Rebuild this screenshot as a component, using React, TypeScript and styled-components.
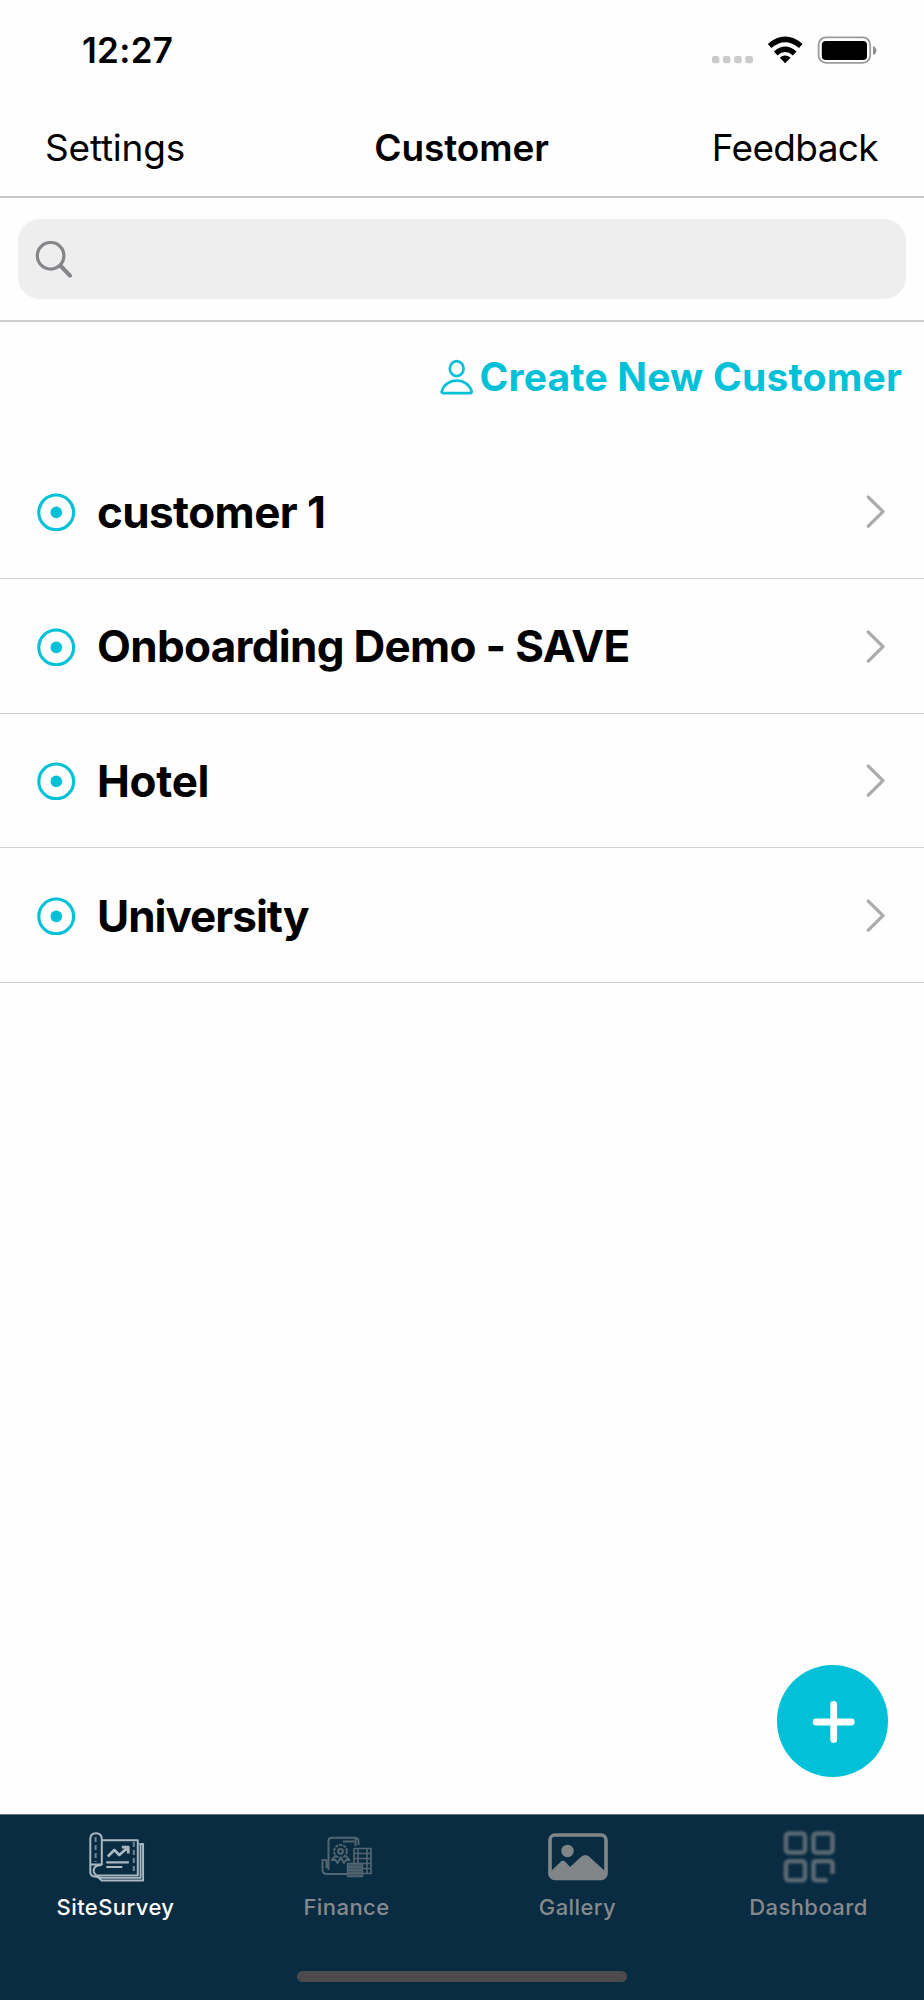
import React from 'react';
import styled, { createGlobalStyle } from 'styled-components';

const ACCENT = '#00c1d7';
const NAVY = '#0a2c42';

const GlobalStyle = createGlobalStyle`
  *, *::before, *::after { box-sizing: border-box; }
  body {
    margin: 0;
    background: #fff;
    color: #000;
    font-family: Inter, 'Liberation Sans', sans-serif;
    -webkit-font-smoothing: antialiased;
  }
  svg { display: block; flex: none; }
`;

const Screen = styled.div`
  position: relative;
  width: 924px;
  height: 2000px;
  display: flex;
  flex-direction: column;
  overflow: hidden;
  background: #fefefe;
`;

const StatusBar = styled.div`
  height: 100px;
  padding: 0 47px 0 82px;
  display: flex;
  justify-content: space-between;
  align-items: center;
`;

const Label = styled.span<{ $size: number; $weight?: number; $spacing?: number }>`
  font-size: ${p => p.$size}px;
  font-weight: ${p => p.$weight ?? 400};
  letter-spacing: ${p => p.$spacing ?? 0}px;
  line-height: 1.2;
  white-space: nowrap;
`;

const NavBar = styled.header`
  height: 98px;
  padding: 0 46px 0 45px;
  display: grid;
  grid-template-columns: 1fr auto 1fr;
  align-items: center;
  border-bottom: 2px solid #c6c6c7;

  & > :last-child { justify-self: end; }
`;

const SearchSection = styled.div`
  height: 124px;
  padding: 21px 18px 0;
  border-bottom: 2px solid #cdcdce;
`;

const SearchField = styled.div`
  height: 80px;
  border-radius: 22px;
  background: #eee;
  padding: 22px 17px;
`;

const CreateButton = styled.button`
  align-self: flex-end;
  height: 110px;
  margin-bottom: 12.33px;
  padding: 0 22px 0 0;
  border: 0;
  background: none;
  font-family: inherit;
  color: ${ACCENT};
  display: flex;
  align-items: center;
  gap: 6px;
`;

const List = styled.ul`
  list-style: none;
  margin: 0;
  padding: 0;
  flex: 1;
`;

const Row = styled.li`
  height: 134.67px;
  padding: 2px 38px 0 37px;
  display: flex;
  align-items: center;
  gap: 22px;
  border-bottom: 1px solid #d0d0d2;

  & > :last-child { margin-left: auto; }
`;

const Fab = styled.button`
  position: absolute;
  right: 36px;
  bottom: 223.5px;
  width: 111.5px;
  height: 111.5px;
  padding: 0;
  border: 0;
  border-radius: 50%;
  background: ${ACCENT};
`;

const TabBar = styled.nav`
  height: 186px;
  border-top: 1px solid #6c7a80;
  background: ${NAVY};
  display: grid;
  grid-template-columns: repeat(4, 1fr);
  grid-template-rows: 1fr auto;
`;

const Tab = styled.div<{ $active?: boolean }>`
  display: flex;
  flex-direction: column;
  align-items: center;
  padding-top: 14px;
  gap: 11px;
  color: ${p => (p.$active ? '#fff' : '#85898c')};
`;

const TabIcon = styled.svg<{ $soften?: number }>`
  width: 60px;
  height: 54px;
  overflow: visible;
  fill: none;
  filter: ${p => (p.$soften ? `blur(${p.$soften}px)` : 'none')};
`;

const HomeIndicator = styled.div`
  grid-column: 1 / -1;
  justify-self: center;
  width: 330px;
  height: 11px;
  margin-bottom: 18px;
  border-radius: 6px;
  background: #4d4a4b;
`;

const StatusIcons = () => (
  <svg width="166" height="30" viewBox="711 35 166 30">
    <g fill="#cbcbcb">
      <rect x="712" y="56" width="7.4" height="7.2" rx="2" />
      <rect x="723" y="56" width="7.4" height="7.2" rx="2" />
      <rect x="734.2" y="56" width="7.6" height="7.2" rx="2" />
      <rect x="745.3" y="56" width="7.6" height="7.2" rx="2" />
    </g>
    <path d="M785.2 63.2L779.8 57.8Q785.2 53.4 790.6 57.8Z" />
    <g fill="none" stroke="#000" strokeWidth="5.4">
      <path d="M775.7 53.5Q785.2 45 794.7 53.5" />
      <path d="M769.6 46Q785.2 32.8 800.8 46" />
    </g>
    <rect x="818.6" y="37.3" width="51.6" height="25.6" rx="7.5" fill="none" stroke="#9b9b9b" strokeWidth="1.8" />
    <rect x="821.8" y="41" width="45.2" height="19" rx="4" />
    <path d="M873 46q3.4 1 3.4 4.5t-3.4 4.5z" fill="#8e8e8e" />
  </svg>
);

const SearchIcon = () => (
  <svg width="38" height="38" viewBox="0 0 38 38" fill="none" stroke="#85858a" strokeLinecap="round">
    <circle cx="15.6" cy="14.8" r="13.3" strokeWidth="3.2" />
    <path d="M25.4 24.6L35 34.6" strokeWidth="4.2" />
  </svg>
);

const PersonIcon = () => (
  <svg width="33" height="36" viewBox="0 0 33 36" fill="none" stroke={ACCENT} strokeWidth="2.7">
    <ellipse cx="16.7" cy="9.6" rx="6.9" ry="7.5" />
    <path d="M3.5 34.2h26.4c1.3 0 2-.9 1.6-2.2C30 26.4 24 21.5 16.7 21.5S3.4 26.4 1.9 32c-.4 1.3.3 2.2 1.6 2.2Z" />
  </svg>
);

const TargetIcon = () => (
  <svg width="38" height="38" viewBox="0 0 38 38">
    <circle cx="19.2" cy="19.4" r="17.4" fill="none" stroke={ACCENT} strokeWidth="3.1" />
    <circle cx="19.3" cy="19.4" r="5.8" fill={ACCENT} />
  </svg>
);

const Chevron = () => (
  <svg width="20" height="34" viewBox="0 0 20 34" fill="none" stroke="#acacac" strokeWidth="3.4" strokeLinecap="round" strokeLinejoin="round">
    <path d="M2.3 2.1L17 16.6L2.3 31.1" />
  </svg>
);

const PlusIcon = () => (
  <svg width="112" height="112" viewBox="0 0 112 112" stroke="#fff" strokeWidth="6.8" strokeLinecap="round">
    <path d="M56.7 39.4v35.2M39.1 57h35.2" />
  </svg>
);

const SurveyIcon = () => (
  <TabIcon viewBox="0 0 60 54" stroke="#a9b7c0" strokeWidth="2" strokeLinejoin="round" $soften={0.5}>
    <g transform="translate(-0.7 0)">
      <path d="M5 44V10Q5 4.2 10.7 4.2T16.5 10V36M16.5 11.2H52.5V46.5H10" />
      <path d="M5 35.5H16.5M5 44Q6 49 15 47.5M16.5 36Q7.5 36 8.5 43Q9 45 11 46" />
      <path d="M54 15H57.8V51.5H16.5L11 47M55.3 16V48.9H13" strokeWidth="1.9" />
      <path d="M10.3 8V33M48.5 13V44" stroke="#6f8795" strokeDasharray="5 3" />
      <path d="M22.5 27.5L29 21L34 26L42.5 18.5M36.5 18.2H43V24.5" strokeWidth="2.7" />
      <path d="M21 33.3H43.5M21 38H37" strokeWidth="2.2" />
    </g>
  </TabIcon>
);

const FinanceIcon = () => (
  <TabIcon viewBox="0 0 60 54" stroke="#51646f" strokeWidth="2" strokeLinejoin="round" $soften={0.6}>
    <path d="M11.5 41V12Q11.5 8.800 15 8.800H38Q41.500 8.800 41.500 13V16M9.500 31H5.500V41Q5.500 45 10 45H31M9.500 31V39M38.500 10V17M26 12.500H37" />
    <circle cx="23.5" cy="22.3" r="6.4" strokeDasharray="3 1" />
    <circle cx="23.5" cy="22.3" r="2.4" />
    <path d="M19 26.5L15 31L18.5 31L20.5 34L23.5 29M28 26.5L32.5 31L29 31L27 34L24 29" />
    <path d="M37 19.500H54V44.500H37ZM37 24.500H54M37 29.500H54M37 34.500H54M37 39.500H54M41 20V44M50 20V44" strokeWidth="1.7" />
    <path d="M30.500 34.500H45.500V47.500H30.500ZM30.500 38H45.500M30.500 41H45.500M30.500 44H45.500" fill="#3d5565" strokeWidth="1.5" />
  </TabIcon>
);

const GalleryIcon = () => (
  <TabIcon viewBox="0 0 60 54">
    <rect x="2" y="6" width="56" height="43.5" rx="5" fill="none" stroke="#808588" strokeWidth="3.7" />
    <circle cx="19.5" cy="22" r="6.2" fill="#808588" />
    <path d="M2 43L12.5 33Q15 30.5 17.5 33L22 38L33.5 27.5Q37.5 24.5 41 27.5L58 43V47Q58 50 54 50H6Q2 50 2 47Z" fill="#808588" />
  </TabIcon>
);

const DashboardIcon = () => (
  <TabIcon viewBox="0 0 60 54" stroke="#5a6973" strokeWidth="4.6" $soften={1}>
    <rect x="7" y="4.5" width="19" height="19" rx="3" />
    <rect x="34.5" y="4.5" width="19" height="19" rx="3" />
    <rect x="7" y="32.2" width="19" height="19" rx="3" />
    <path d="M48.5 51.2H37.5Q34.5 51.2 34.5 48.2V35.2Q34.5 32.2 37.5 32.2H50.5Q53.5 32.2 53.5 35.2V45" />
  </TabIcon>
);

const customers = [
  { name: 'customer 1', spacing: -0.6 },
  { name: 'Onboarding Demo - SAVE', spacing: -0.69 },
  { name: 'Hotel', spacing: -0.3 },
  { name: 'University', spacing: -1 },
];

const tabs = [
  { name: 'SiteSurvey', icon: <SurveyIcon />, active: true },
  { name: 'Finance', icon: <FinanceIcon /> },
  { name: 'Gallery', icon: <GalleryIcon /> },
  { name: 'Dashboard', icon: <DashboardIcon /> },
];

export default function App() {
  return (
    <Screen>
      <GlobalStyle />
      <StatusBar>
        <Label $size={35} $weight={600} $spacing={0.3}>12:27</Label>
        <StatusIcons />
      </StatusBar>
      <NavBar>
        <Label $size={37} $spacing={-0.2}>Settings</Label>
        <Label $size={37} $weight={600} $spacing={-0.1}>Customer</Label>
        <Label $size={37} $spacing={-0.65}>Feedback</Label>
      </NavBar>
      <SearchSection>
        <SearchField>
          <SearchIcon />
        </SearchField>
      </SearchSection>
      <CreateButton>
        <PersonIcon />
        <Label $size={39} $weight={700} $spacing={0.2}>Create New Customer</Label>
      </CreateButton>
      <List>
        {customers.map(({ name, spacing }) => (
          <Row key={name}>
            <TargetIcon />
            <Label $size={44} $weight={700} $spacing={spacing}>{name}</Label>
            <Chevron />
          </Row>
        ))}
      </List>
      <TabBar>
        {tabs.map(tab => (
          <Tab key={tab.name} $active={tab.active}>
            {tab.icon}
            <Label $size={22} $weight={500} $spacing={0.42}>{tab.name}</Label>
          </Tab>
        ))}
        <HomeIndicator />
      </TabBar>
      <Fab aria-label="Add customer">
        <PlusIcon />
      </Fab>
    </Screen>
  );
}
